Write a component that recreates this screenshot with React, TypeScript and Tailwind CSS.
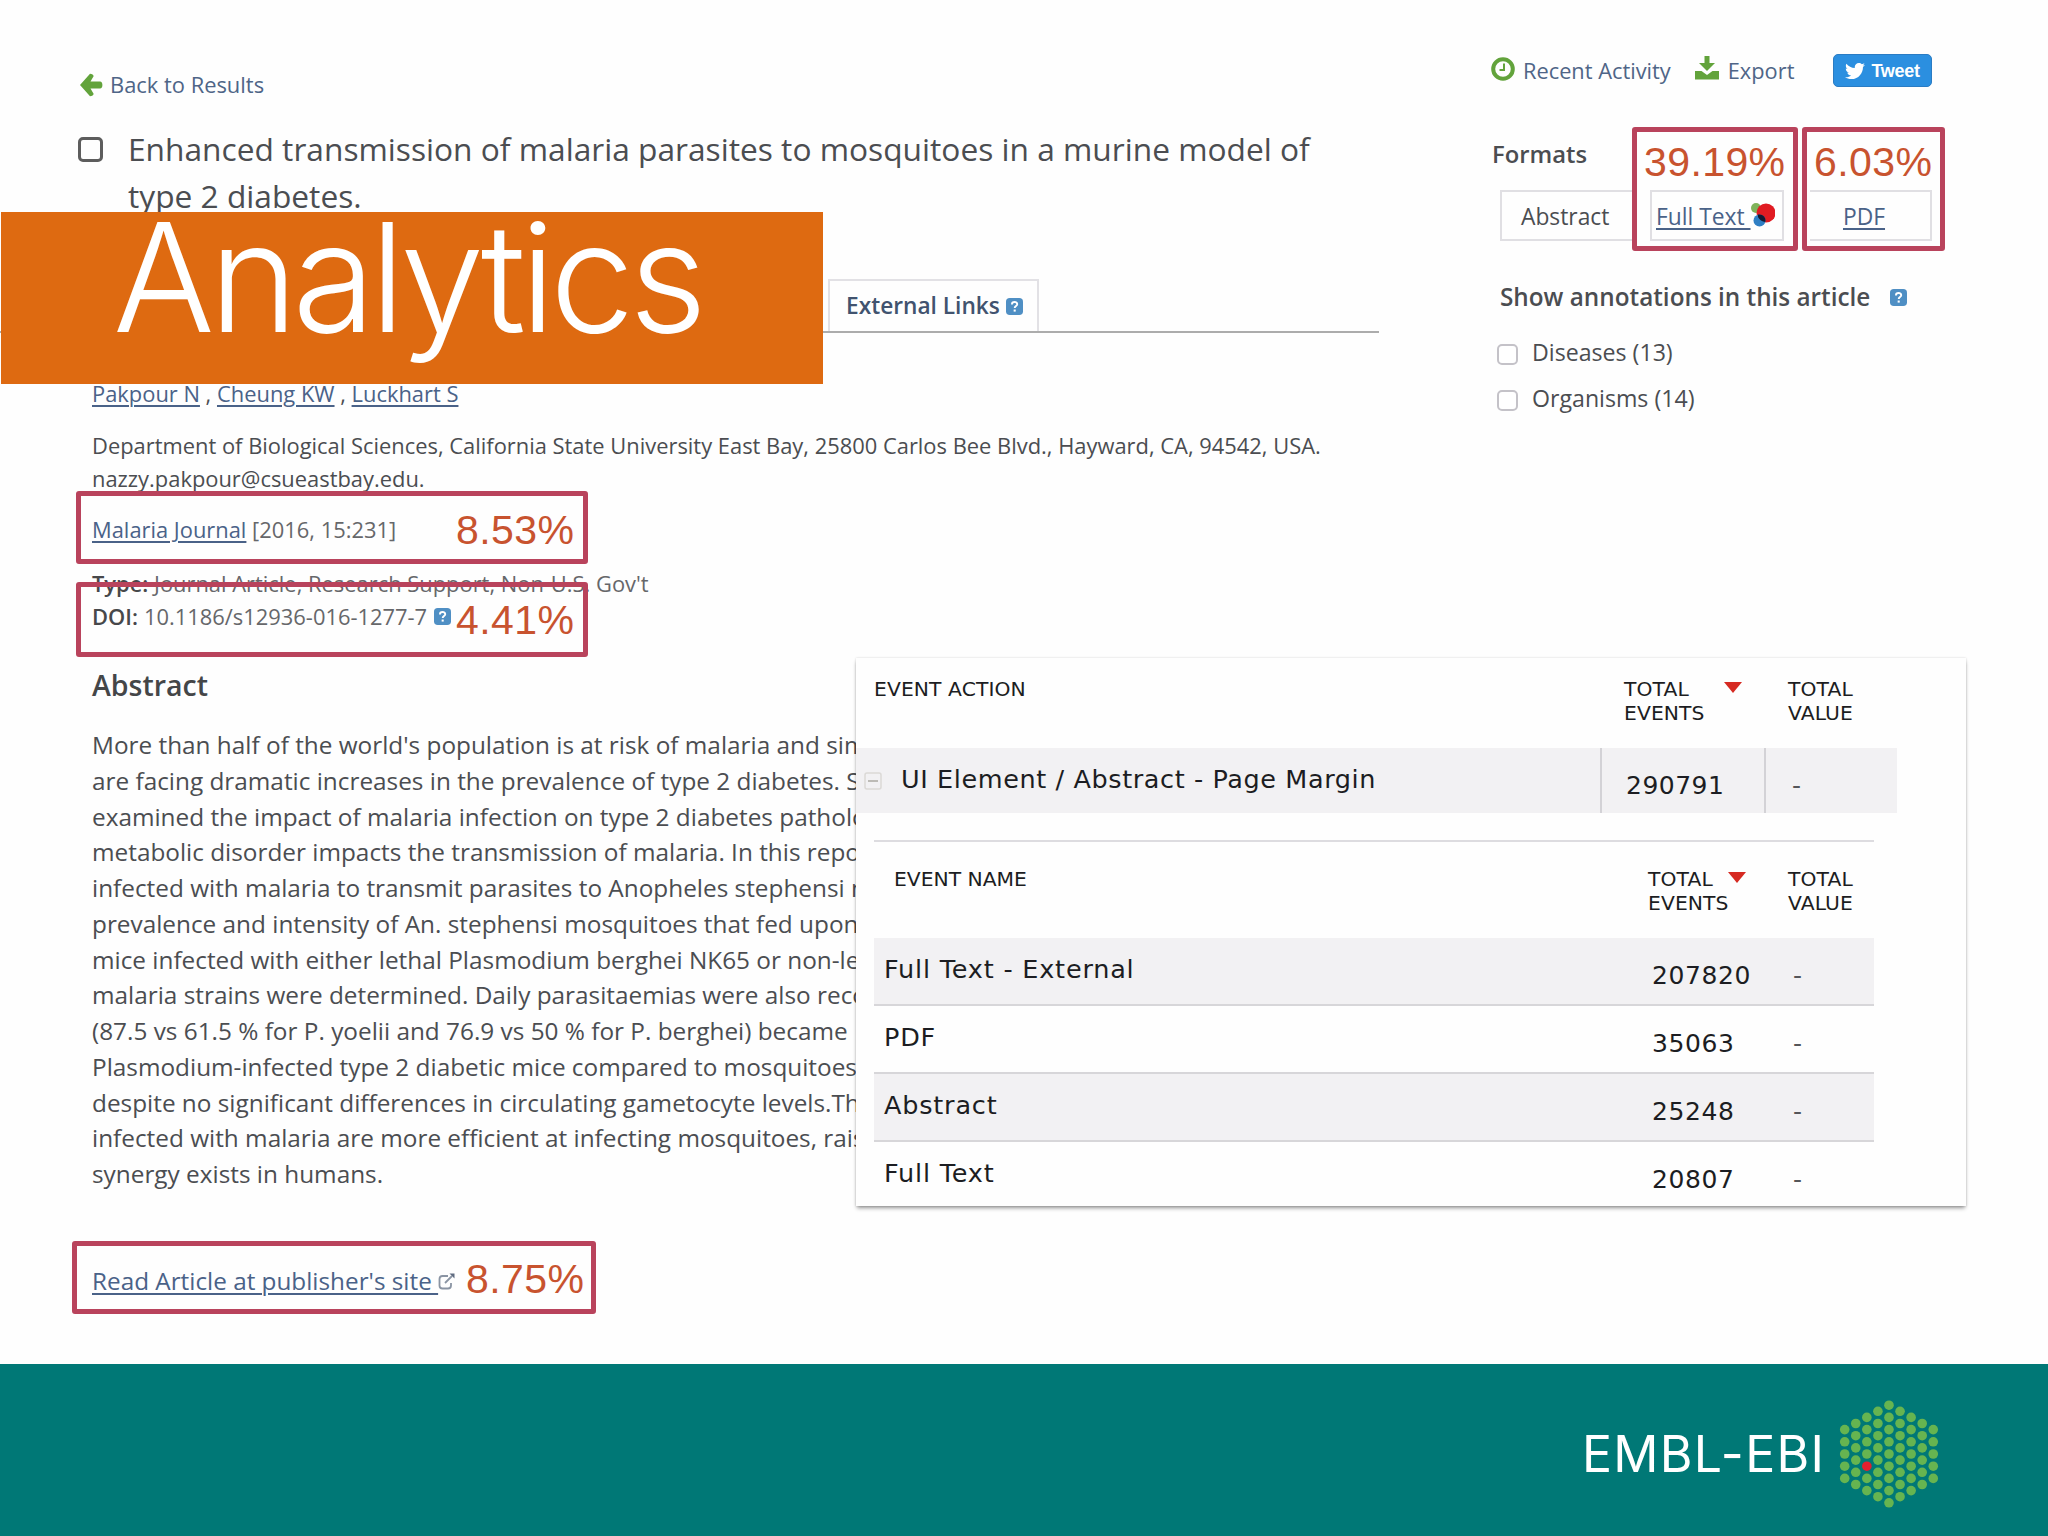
import type { ReactNode } from 'react';
import { FaTwitter } from 'react-icons/fa';

const abstractLines = [
  "More than half of the world's population is at risk of malaria and simul",
  'are facing dramatic increases in the prevalence of type 2 diabetes. Stu',
  'examined the impact of malaria infection on type 2 diabetes pathology',
  'metabolic disorder impacts the transmission of malaria. In this report,',
  'infected with malaria to transmit parasites to Anopheles stephensi mo',
  'prevalence and intensity of An. stephensi mosquitoes that fed upon',
  'mice infected with either lethal Plasmodium berghei NK65 or non-leth',
  'malaria strains were determined. Daily parasitaemias were also recor',
  '(87.5 vs 61.5 % for P. yoelii and 76.9 vs 50 % for P. berghei) became',
  'Plasmodium-infected type 2 diabetic mice compared to mosquitoes',
  'despite no significant differences in circulating gametocyte levels.Thes',
  'infected with malaria are more efficient at infecting mosquitoes, raisin',
  'synergy exists in humans.',
];

const events = [
  { name: 'Full Text - External', total: '207820' },
  { name: 'PDF', total: '35063' },
  { name: 'Abstract', total: '25248' },
  { name: 'Full Text', total: '20807' },
];

const HelpIcon = ({ className = '' }: { className?: string }) => (
  <svg viewBox="0 0 18 18" className={`w-[17px] h-[17px] shrink-0 ${className}`}>
    <rect width="18" height="18" rx="4" fill="#4f8fc4" />
    <path d="M6.3 6.8c0-3.4 5.6-3.2 5.6-.2 0 1.9-2.7 1.9-2.7 4" fill="none" stroke="#fff" strokeWidth="2" />
    <rect x="8.1" y="12.2" width="2.2" height="2.2" fill="#fff" />
  </svg>
);

const Link = ({ children }: { children: ReactNode }) => (
  <a href="#" className="text-[#4a6288] underline decoration-[1.5px] underline-offset-[3px]">{children}</a>
);

// Red outline drawn over the part of the page the number belongs to
const Highlight = ({ className, value, valueClass }: { className: string; value: string; valueClass: string }) => (
  <div className={`absolute border-[5px] border-[#b9435c] rounded-[3px] ${className}`}>
    <span className={`absolute whitespace-nowrap font-['Liberation_Sans',Arial,sans-serif] text-[41px] leading-[40px] tracking-[0.4px] text-[#c8532f] ${valueClass}`}>
      {value}
    </span>
  </div>
);

const SortArrow = ({ className }: { className: string }) => (
  <svg viewBox="0 0 18 11" className={`w-[18px] h-[11px] ${className}`}>
    <path d="M0 0h18l-9 11z" fill="#d62a22" />
  </svg>
);

const HexLogo = () => {
  const columns = [5, 6, 7, 8, 9, 8, 7, 6, 5];
  return (
    <svg viewBox="0 0 100 108" className="w-[100px] h-[108px]">
      {columns.map((count, col) =>
        Array.from({ length: count }, (_, row) => (
          <circle
            key={`${col}-${row}`}
            cx={5.7 + col * 11.07}
            cy={54 + (row - (count - 1) / 2) * 12.2}
            r="4.8"
            fill={col === 2 && row === 4 ? '#e21f2f' : '#66b450'}
          />
        ))
      )}
    </svg>
  );
};

const Article = () => (
  <article className="w-[1379px] pt-[65px] text-[21.9px] leading-[32px] text-[#4b4d51] whitespace-nowrap">
    <div className="flex items-center h-10 pl-[79px]">
      <svg viewBox="0 0 24 24" className="w-6 h-6 mr-[7px]">
        <path d="M1 12 11 .8c2 0 3.6 1.2 3.6 2.4L11.5 8.6H21c1.6 0 2.4 1.2 2.4 3.4s-.8 3.4-2.4 3.4h-9.5l3.1 5.4c0 1.2-1.6 2.4-3.6 2.4z" fill="#62a33b" />
      </svg>
      <span className="text-[#4f6587]">Back to Results</span>
    </div>

    <div className="flex pt-5 pl-[78px]">
      <span className="w-[25px] h-[25px] mt-[12px] mr-[25px] border-[3px] border-[#5d5d5d] rounded-[5px]" />
      <h1 className="text-[31.7px] leading-[47px]">
        Enhanced transmission of malaria parasites to mosquitoes in a murine model of
        <br />
        type 2 diabetes.
      </h1>
    </div>

    <div className="flex h-[52px] mt-[60px] pl-[828px] border-b-2 border-[#acacac] box-content w-[551px]">
      <div className="flex items-center w-[211px] pl-[16px] border-2 border-b-0 border-[#e2e1e5] text-[22.7px] font-semibold text-[#41536f]">
        External Links
        <HelpIcon className="ml-[6px]" />
      </div>
    </div>

    <div className="pl-[92px]">
      <p className="mt-[45px]">
        <Link>Pakpour N</Link> , <Link>Cheung KW</Link> , <Link>Luckhart S</Link>
      </p>
      <p className="mt-5 leading-[32.5px]">
        Department of Biological Sciences, California State University East Bay, 25800 Carlos Bee Blvd., Hayward, CA, 94542, USA.
        <br />
        nazzy.pakpour@csueastbay.edu.
      </p>
      <p className="mt-[19px] text-[#66676a]">
        <Link>Malaria Journal</Link> [2016, 15:231]
      </p>
      <p className="mt-[21px] leading-[33px] text-[#66676a]">
        <b className="font-semibold text-[#47484a]">Type:</b> Journal Article, Research Support, Non-U.S. Gov't
      </p>
      <p className="flex items-center leading-[33px] text-[#66676a]">
        <b className="font-semibold text-[#47484a] mr-[6px]">DOI:</b> 10.1186/s12936-016-1277-7
        <HelpIcon className="ml-[7px]" />
      </p>
      <h2 className="mt-[34px] text-[28.5px] leading-[36px] font-semibold text-[#444648]">Abstract</h2>
      <div className="mt-6 text-[24.35px] leading-[35.77px]">
        {abstractLines.map((line) => (
          <p key={line}>{line}</p>
        ))}
      </div>
      <p className="flex items-center mt-[73px] text-[24.3px]">
        <Link>Read Article at publisher's site&nbsp;</Link>
        <svg viewBox="0 0 18 18" className="w-[18px] h-[18px]" fill="none" stroke="#8a94a3" strokeWidth="1.8">
          <path d="M10 4H4.5C2.5 4 1.5 5 1.5 7v6.5c0 2 1 3 3 3H10c2 0 3-1 3-3V11" />
          <path d="m7 11 7-7" />
          <path d="M11.5 1.5h5v5z" fill="#5f6b80" stroke="none" />
        </svg>
      </p>
    </div>
  </article>
);

const Aside = () => (
  <aside className="ml-[112px] w-[460px] pt-[54px] text-[21.8px] leading-[32px] text-[#4b4d51] whitespace-nowrap">
    <div className="flex items-center h-[33px] text-[#4f6587]">
      <svg viewBox="0 0 24 24" className="w-6 h-6 mr-2 mb-[3px]" fill="none" stroke="#62a33b">
        <circle cx="12" cy="12" r="9.8" strokeWidth="4" />
        <path d="M13 6.5V13H8.5" strokeWidth="2" />
      </svg>
      Recent Activity
      <svg viewBox="0 0 26 24" className="w-[26px] h-6 ml-[23px] mr-2 mb-[6px]" fill="#62a33b">
        <path d="M10.5 0h5v7h5.5L13 15 5 7h5.5z" />
        <path d="M1 15h6.5l5.5 4 5.5-4H25v8.5H1z" />
      </svg>
      Export
      <div className="flex items-center w-[99px] h-[33px] ml-[39px] pl-[11px] rounded-[5px] border border-[#2a7cc4] bg-[#2b8fe0] text-white">
        <FaTwitter className="w-5 h-5 mr-[6px]" />
        <span className="font-['Liberation_Sans',Arial,sans-serif] text-[18px] font-bold tracking-[-0.3px]">Tweet</span>
      </div>
    </div>

    <h3 className="mt-[51px] pl-[1px] text-[23.8px] font-semibold">Formats</h3>
    <div className="flex h-[51px] mt-[20px] pl-[9px] text-[22.8px]">
      <div className="flex items-center w-[134px] pt-[2px] pl-[19px] border-2 border-r-0 border-[#e0dfe3]">Abstract</div>
      <div className="flex items-center w-[134px] pt-[2px] ml-4 pl-[4px] border-2 border-[#e0dfe3]">
        <Link>Full Text&nbsp;</Link>
        <svg viewBox="0 0 24 24" className="w-6 h-6 mb-1">
          <circle cx="5" cy="5" r="5" fill="#7fb35a" />
          <circle cx="15" cy="10" r="9.5" fill="#e01b22" />
          <circle cx="8.5" cy="17.5" r="6" fill="#2f7fc4" />
          <path d="M7 11.6a6 6 0 0 1 7.3 7.3A9.5 9.5 0 0 1 7 14z" fill="#141a33" />
        </svg>
      </div>
      <div className="w-[26px]" />
      <div className="flex items-center justify-center w-[122px] pt-[2px] pr-[16px] pl-1 border-2 border-l-0 border-[#e0dfe3]">
        <Link>PDF</Link>
      </div>
    </div>

    <h3 className="flex items-center mt-[40px] pl-[9px] text-[24.3px] font-semibold">
      Show annotations in this article
      <HelpIcon className="ml-5" />
    </h3>
    <div className="mt-[23px] pl-[6px] space-y-[14px] text-[23.15px]">
      {['Diseases (13)', 'Organisms (14)'].map((label) => (
        <label key={label} className="flex items-center">
          <span className="w-[21px] h-[21px] mt-[5px] mr-[14px] rounded-[5px] border-2 border-[#c4c2c8] bg-white" />
          {label}
        </label>
      ))}
    </div>
  </aside>
);

const EventsPanel = () => (
  <section className="absolute left-[856px] top-[658px] w-[1110px] h-[548px] bg-[#fefefe] shadow-[0_3px_4px_-1px_rgba(0,0,0,0.42),0_0_2px_rgba(0,0,0,0.16)] font-['DejaVu_Sans',Verdana,sans-serif] text-[25px] text-[#1c1d22] whitespace-nowrap">
    <div className="flex h-[90px] pt-[19px] text-[20.3px] leading-6">
      <p className="w-[768px] pl-[18px] tracking-[0.1px]">EVENT ACTION</p>
      <p className="w-[100px] tracking-[0.1px]">TOTAL<br />EVENTS</p>
      <SortArrow className="mt-[5px] mr-[46px]" />
      <p className="tracking-[0.1px]">TOTAL<br />VALUE</p>
    </div>

    <div className="flex w-[1041px] h-[65px] bg-[#f2f1f3]">
      <div className="flex items-center w-[744px] pl-2 pb-[2px]">
        <svg viewBox="0 0 18 18" className="w-[18px] h-[18px] mt-[3px] mr-[19px]" fill="none" stroke="#dbd9d6" strokeWidth="1.5">
          <rect x="1" y="1" width="16" height="16" rx="2" />
          <path d="M4 9h10" stroke="#bdbbb6" strokeWidth="2" />
        </svg>
        <span className="text-[25.5px] tracking-[0.6px]">UI Element / Abstract - Page Margin</span>
      </div>
      <div className="flex items-center w-[164px] pl-[24px] pt-[10px] border-l-2 border-[#d3d2d6] tracking-[0.5px]">290791</div>
      <div className="flex items-center flex-1 pl-[26px] pt-[10px] border-l-2 border-[#d3d2d6] text-[#55565a]">-</div>
    </div>

    <div className="ml-[18px] mt-[27px] w-[1000px] border-t-2 border-[#dddce0]">
      <div className="flex h-[96px] pt-[25px] text-[20.3px] leading-6">
        <p className="w-[774px] pl-[20px]">EVENT NAME</p>
        <p className="w-[80px] tracking-[0.1px]">TOTAL<br />EVENTS</p>
        <SortArrow className="mt-[5px] mr-[42px]" />
        <p className="tracking-[0.1px]">TOTAL<br />VALUE</p>
      </div>
      {events.map(({ name, total }) => (
        <div key={name} className="flex items-center h-[68px] border-b-2 border-[#d7d6d9] even:bg-[#f2f1f3] last:h-[66px] last:border-b-0">
          <span className="w-[778px] pl-[10px] pb-[3px] text-[25.5px] tracking-[0.8px]">{name}</span>
          <span className="w-[141px] pt-[9px] tracking-[0.6px]">{total}</span>
          <span className="pt-[9px] text-[#55565a]">-</span>
        </div>
      ))}
    </div>
  </section>
);

export default function App() {
  return (
    <div className="w-[2048px] h-[1536px] overflow-hidden flex flex-col bg-[#fefefe] font-['Open_Sans','Noto_Sans',sans-serif]">
      <main className="relative flex h-[1364px]">
        <Article />
        <Aside />

        <div className="absolute left-px top-[212px] w-[822px] h-[172px] bg-[#de6a11]">
          <p className="pl-[112px] font-[Inter,'Liberation_Sans',sans-serif] font-light text-[151px] leading-[131px] tracking-[-5.5px] text-white whitespace-nowrap">
            Analytics
          </p>
        </div>

        <Highlight className="left-[76px] top-[491px] w-[512px] h-[73px]" value="8.53%" valueClass="left-[375px] top-[14px]" />
        <Highlight className="left-[76px] top-[582px] w-[512px] h-[75px]" value="4.41%" valueClass="left-[375px] top-[13px]" />
        <Highlight className="left-[72px] top-[1241px] w-[524px] h-[73px]" value="8.75%" valueClass="left-[389px] top-[13px]" />
        <Highlight className="left-[1632px] top-[127px] w-[166px] h-[124px]" value="39.19%" valueClass="left-[7px] top-[10px]" />
        <Highlight className="left-[1802px] top-[127px] w-[143px] h-[124px]" value="6.03%" valueClass="left-[7px] top-[10px]" />

        <EventsPanel />
      </main>

      <footer className="flex h-[172px] bg-[#007876] pl-[1582px] pt-[36px]">
        <span className="mt-[22px] w-[257px] font-[Inter,'Liberation_Sans',sans-serif] text-[50px] leading-[64px] tracking-[1.3px] text-white whitespace-nowrap">
          EMBL-EBI
        </span>
        <HexLogo />
      </footer>
    </div>
  );
}
